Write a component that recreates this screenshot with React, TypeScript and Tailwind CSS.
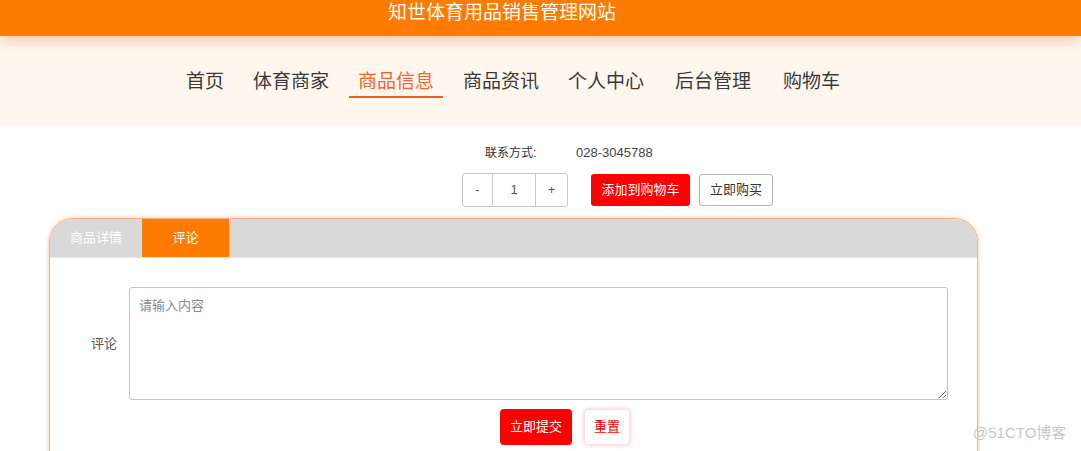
import { useState } from 'react';

const navItems = [
  { name: '首页', cls: '' },
  { name: '体育商家', cls: '' },
  { name: '商品信息', cls: '' },
  { name: '商品资讯', cls: '' },
  { name: '个人中心', cls: '' },
  { name: '后台管理', cls: 'ml-[2px]' },
  { name: '购物车', cls: 'ml-[3px]' },
];

const App = () => {
  const [count] = useState(1);
  const [tab, setTab] = useState(1);

  return (
    <div
      className="relative w-[1081px] h-[451px] overflow-hidden bg-white"
      style={{ fontFamily: '"Liberation Sans", "Noto Sans CJK SC", sans-serif' }}
    >
      {/* header */}
      <div className="relative z-10 h-[36px] bg-[#FF7B00] shadow-[0_4px_14px_rgba(225,120,70,0.4)] pl-[388px]">
        <div className="text-[19px] leading-[25px] text-white">知世体育用品销售管理网站</div>
      </div>

      {/* nav */}
      <div className="h-[89px] bg-[#FFF7EE] flex pl-[177px] pt-[33px] gap-[11px]">
        {navItems.map((item, index) => (
          <div
            key={item.name}
            className={
              index === 2
                ? 'h-[29px] px-[9px] text-[19px] leading-[26px] text-[#EE6630] border-b-2 border-[#E8602A]'
                : `h-[29px] px-[9px] text-[19px] leading-[26px] text-[#3a3a3a] border-b-2 border-transparent ${item.cls}`
            }
          >
            {item.name}
          </div>
        ))}
      </div>

      {/* contact */}
      <div className="flex mt-[19px] pl-[485px] h-[18px] items-center">
        <div className="w-[91px] text-[12px] text-[#333]">联系方式:</div>
        <div className="text-[13px] text-[#444]">028-3045788</div>
      </div>

      {/* quantity + buttons */}
      <div className="flex mt-[11px] pl-[462px] items-center">
        <div className="flex h-[34px] w-[106px] border border-[#c8c8c8] rounded-[3px] text-[13px] text-[#555]">
          <div className="w-[30px] flex items-center justify-center border-r border-[#c8c8c8]">-</div>
          <div className="w-[43px] flex items-center justify-center border-r border-[#c8c8c8]">{count}</div>
          <div className="flex-1 flex items-center justify-center">+</div>
        </div>
        <button className="ml-[23px] w-[99px] h-[32px] bg-[#FF0000] text-white text-[13px] rounded-[3px]">
          添加到购物车
        </button>
        <button className="ml-[9px] w-[74px] h-[32px] bg-white border border-[#b5b5b5] text-[#333] text-[13px] rounded-[3px]">
          立即购买
        </button>
      </div>

      {/* card */}
      <div className="ml-[49px] mt-[11px] w-[929px] h-[260px] bg-white border border-[#F7B089] rounded-t-[24px] shadow-[0_0_4px_rgba(250,140,90,0.55)] overflow-hidden">
        <div className="flex h-[39px] bg-[#D9D9D9] border-b border-[#e6e6e6] text-[13px] text-white">
          <div
            className={
              tab === 0
                ? 'w-[92px] flex items-center justify-center bg-[#FF7B00]'
                : 'w-[92px] flex items-center justify-center'
            }
            onClick={() => setTab(0)}
          >
            商品详情
          </div>
          <div
            className={
              tab === 1
                ? 'w-[87px] flex items-center justify-center bg-[#FF7B00]'
                : 'w-[87px] flex items-center justify-center'
            }
            onClick={() => setTab(1)}
          >
            评论
          </div>
        </div>

        <div className="flex items-center mt-[29px]">
          <div className="w-[67px] text-right text-[13px] text-[#555]">评论</div>
          <textarea
            className="ml-[12px] w-[819px] h-[113px] border border-[#c4c4c4] rounded-[3px] px-[9px] py-[8px] text-[13px] text-[#333] placeholder:text-[#8a8a8a] outline-none"
            placeholder="请输入内容"
          />
        </div>

        <div className="flex pl-[450px] mt-[9px] gap-[12px]">
          <button className="w-[72px] h-[36px] bg-[#FF0000] text-white text-[13px] rounded-[4px]">立即提交</button>
          <button className="w-[46px] h-[36px] bg-white text-[#FF0000] text-[13px] rounded-[4px] border border-[#fde0e0] shadow-[0_0_4px_rgba(255,80,80,0.35)]">
            重置
          </button>
        </div>
      </div>

      {/* watermark */}
      <div className="absolute left-[973px] top-[422px] text-[15px] leading-[22px] text-[#c8c8c8]">@51CTO博客</div>
    </div>
  );
};

export default App;
